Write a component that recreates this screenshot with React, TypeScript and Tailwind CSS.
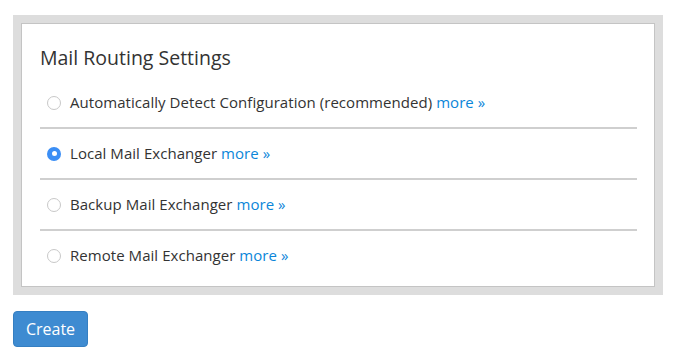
import React from "react";

const options = [
  { label: "Automatically Detect Configuration (recommended)", checked: false },
  { label: "Local Mail Exchanger", checked: true },
  { label: "Backup Mail Exchanger", checked: false },
  { label: "Remote Mail Exchanger", checked: false },
];

function Radio({ checked }: { checked: boolean }) {
  if (checked) {
    return (
      <span className="flex h-[14px] w-[14px] shrink-0 items-center justify-center rounded-full bg-[#3b8ef5]">
        <span className="h-[5px] w-[5px] rounded-full bg-white" />
      </span>
    );
  }
  return (
    <span className="h-[14px] w-[14px] shrink-0 rounded-full border border-[#c8c8c8] bg-white" />
  );
}

export default function App() {
  return (
    <div
      className="min-h-[357px] bg-white pl-[13px] pt-[15px]"
      style={{ fontFamily: '"Open Sans", "Liberation Sans", sans-serif' }}
    >
      <div className="w-[650px] bg-[#dddddd] p-[8px]">
        <div className="border border-[#c4c4c4] bg-white pl-[18px] pr-[17px] pb-[6px]">
          <h2 className="pt-[20px] text-[19.5px] leading-[28px] text-[#333333]">
            Mail Routing Settings
          </h2>
          <div className="mt-[6px]">
            {options.map((o, i) => (
              <div
                key={o.label}
                className={
                  "flex h-[49px] items-center pl-[7px] text-[15px] tracking-[0.05px] text-[#333333] " +
                  (i < options.length - 1 ? "box-content border-b-2 border-[#cfcfcf]" : "")
                }
              >
                <Radio checked={o.checked} />
                <span className="ml-[9px] pb-[1px]">
                  {o.label}{" "}
                  <a className="text-[#0b86d9]" href="#">
                    more »
                  </a>
                </span>
              </div>
            ))}
          </div>
        </div>
      </div>
      <button className="mt-[16px] h-[36px] w-[75px] rounded-[4px] border border-[#357fc2] bg-[#3e8bd1] text-[16px] text-white">
        Create
      </button>
    </div>
  );
}
